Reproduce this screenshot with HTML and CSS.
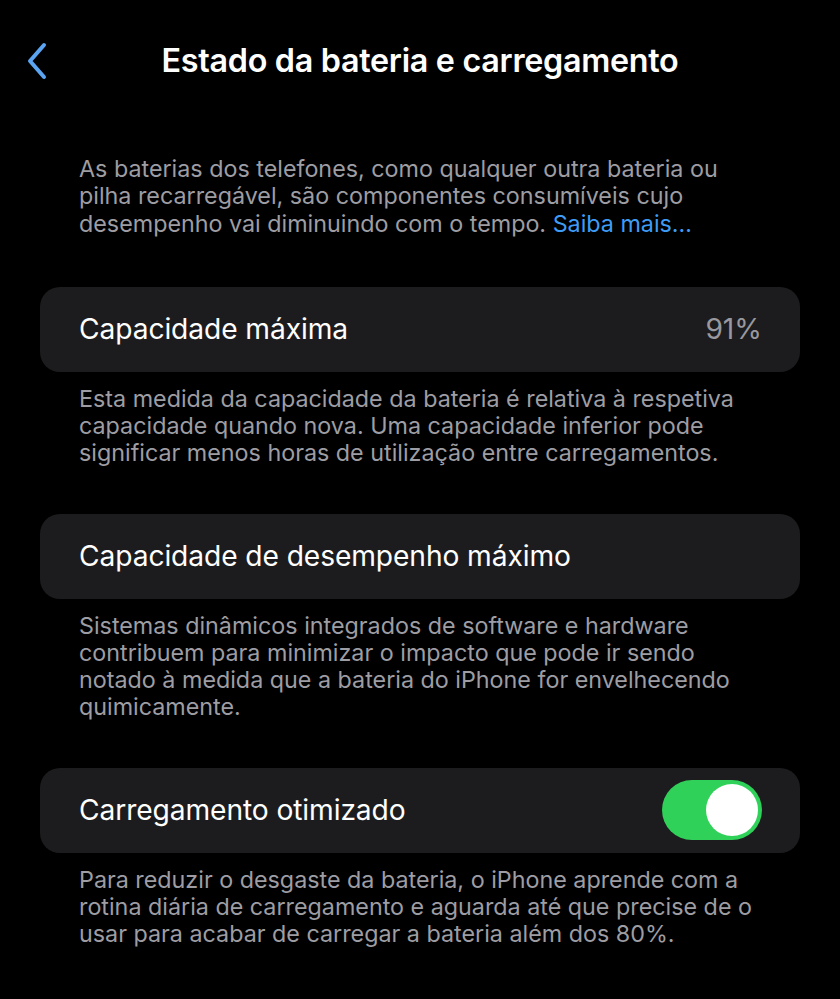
FILE: index.html
```html
<!DOCTYPE html>
<html lang="pt">
<head>
<meta charset="utf-8">
<link rel="stylesheet" href="styles.css">
</head>
<body>
<div class="screen">
  <header class="nav">
    <svg class="back" width="22" height="38" viewBox="0 0 22 38"><path d="M18 3 L4 19 L18 35" fill="none" stroke="#5aa4f2" stroke-width="4" stroke-linecap="round" stroke-linejoin="round"/></svg>
    <h1 class="title">Estado da bateria e carregamento</h1>
  </header>
  <p class="intro">As baterias dos telefones, como qualquer outra bateria ou pilha recarregável, são componentes consumíveis cujo desempenho vai diminuindo com o tempo. <span class="link">Saiba mais…</span></p>

  <section class="group">
    <div class="card"><span class="label">Capacidade máxima</span><span class="value">91%</span></div>
    <p class="foot">Esta medida da capacidade da bateria é relativa à respetiva capacidade quando nova. Uma capacidade inferior pode significar menos horas de utilização entre carregamentos.</p>
  </section>

  <section class="group">
    <div class="card"><span class="label">Capacidade de desempenho máximo</span></div>
    <p class="foot">Sistemas dinâmicos integrados de software e hardware contribuem para minimizar o impacto que pode ir sendo notado à medida que a bateria do iPhone for envelhecendo quimicamente.</p>
  </section>

  <section class="group">
    <div class="card"><span class="label">Carregamento otimizado</span><span class="toggle"><span class="knob"></span></span></div>
    <p class="foot">Para reduzir o desgaste da bateria, o iPhone aprende com a rotina diária de carregamento e aguarda até que precise de o usar para acabar de carregar a bateria além dos 80%.</p>
  </section>
</div>
</body>
</html>
```
FILE: styles.css
```css
html, body { margin: 0; padding: 0; background: #000; }
body { font-family: Inter, "Noto Sans", sans-serif; color: #fff; }
.screen { width: 840px; height: 999px; overflow: hidden; padding: 0 40px; box-sizing: border-box; }
.nav { position: relative; height: 122px; display: flex; align-items: flex-start; justify-content: center; }
.back { position: absolute; left: -14px; top: 42px; }
.title { margin: 42px 0 0; font-size: 32.3px; font-weight: 600; line-height: 38px; letter-spacing: -0.3px; }
.intro { margin: 33px 0 0; padding: 0 40px 0 39px; font-size: 23.3px; line-height: 27.3px; color: #9d9da3; }
.link { color: #3f9cf6; }
.group { margin-top: 48px; }
.group:first-of-type { margin-top: 50px; }
.card { height: 85px; background: #1c1c1e; border-radius: 20px; display: flex; align-items: center; justify-content: space-between; padding: 0 38px 0 39px; }
.label { font-size: 28.2px; letter-spacing: -0.1px; }
.value { font-size: 28.2px; color: #98989e; }
.foot { margin: 13px 0 0; padding: 0 40px 0 39px; font-size: 23.3px; line-height: 27px; color: #9d9da3; }
.toggle { width: 100px; height: 60px; border-radius: 30px; background: #30d158; position: relative; margin-right: 0; }
.knob { position: absolute; right: 4px; top: 4px; width: 52px; height: 52px; border-radius: 50%; background: #fff; }
```
